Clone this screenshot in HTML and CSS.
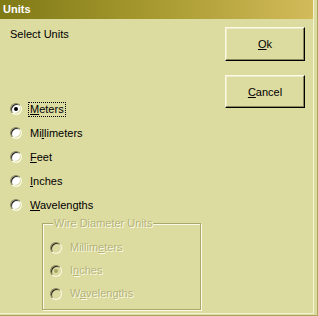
FILE: index.html
```html
<!DOCTYPE html>
<html lang="en">
<head>
    <meta charset="UTF-8">
    <title>Units</title>
    <link rel="stylesheet" href="styles.css">
</head>
<body>
    <div class="window">
        <div class="frame">
            <div class="titlebar">Units</div>
            <div class="client">
                <div class="left">
                    <div class="prompt">Select Units</div>
                    <div class="options">
                        <div class="radio"><span class="circle checked"></span><span class="label focus"><u>M</u>eters</span></div>
                        <div class="radio"><span class="circle"></span><span class="label">Mi<u>l</u>limeters</span></div>
                        <div class="radio"><span class="circle"></span><span class="label"><u>F</u>eet</span></div>
                        <div class="radio"><span class="circle"></span><span class="label"><u>I</u>nches</span></div>
                        <div class="radio"><span class="circle"></span><span class="label"><u>W</u>avelengths</span></div>
                    </div>
                    <fieldset class="group">
                        <legend>Wire Diameter Units</legend>
                        <div class="radio small disabled"><span class="circle"></span><span class="label">Millim<u>e</u>ters</span></div>
                        <div class="radio small disabled"><span class="circle checked"></span><span class="label">I<u>n</u>ches</span></div>
                        <div class="radio small disabled"><span class="circle"></span><span class="label">W<u>a</u>velengths</span></div>
                    </fieldset>
                </div>
                <div class="buttons">
                    <button class="btn ok"><u>O</u>k</button>
                    <button class="btn cancel"><u>C</u>ancel</button>
                </div>
            </div>
        </div>
    </div>
</body>
</html>
```

FILE: styles.css
```css
*{box-sizing:border-box;margin:0;padding:0}
body{font-family:"Liberation Sans",Arial,sans-serif;font-size:11px;color:#000;background:#dcdba0}
.window{width:318px;height:316px;background:#dcdba0;box-shadow:inset -1px -1px 0 #a9a75e}
.frame{width:314px;height:314px;border-right:1px solid #f4f3d2;border-bottom:1px solid #f4f3d2}
.titlebar{height:19px;line-height:19px;padding-left:3px;font-weight:bold;font-size:11px;color:#fff;background:linear-gradient(to right,#7f7a16 0%,#a89a30 50%,#d2bb5a 100%)}
.client{display:flex}
.left{flex:1;padding-left:10px}
.prompt{margin-top:9px;line-height:13px}
.options{margin-top:56px}
.radio{display:flex;align-items:center;height:24px}
.circle{width:12px;height:12px;border-radius:50%;background:#fff;border:1px solid;border-color:#8a8960 #fbfbe8 #fbfbe8 #8a8960;box-shadow:inset 1px 1px 0 #2a2a20,inset -1px -1px 0 #dcdba0;display:flex;align-items:center;justify-content:center;flex:none}
.circle.checked::after{content:"";width:4px;height:4px;border-radius:50%;background:#000}
.label{margin-left:6px;line-height:13px;padding:0 1px;border:1px solid transparent}
.label.focus{border:1px dotted #000}
.group{margin:0 0 0 32px;width:159px;border:1px solid #a9a76a;box-shadow:inset 1px 1px 0 #fbfbe8,1px 1px 0 #fbfbe8;padding:6px 0 4px 7px}
.group legend{margin-left:3px;padding:0 1px;line-height:13px;color:#b5b37a;text-shadow:1px 1px 0 #fbfbe8;background:#dcdba0}
.radio.small{height:23px}
.disabled .circle{background:#dcdba0}
.disabled .circle.checked::after{background:#a9a76a}
.disabled .label{color:#b5b37a;text-shadow:1px 1px 0 #fbfbe8}
.buttons{width:80px;margin-right:8px;padding-top:8px;display:flex;flex-direction:column}
.btn{font-family:inherit;font-size:11px;color:#000;background:#dcdba0;border:1px solid;border-color:#fbfbe8 #000 #000 #fbfbe8;box-shadow:inset -1px -1px 0 #8a8960,inset 1px 1px 0 #ecebc6}
.ok{height:34px}
.cancel{height:33px;margin-top:14px}
```
